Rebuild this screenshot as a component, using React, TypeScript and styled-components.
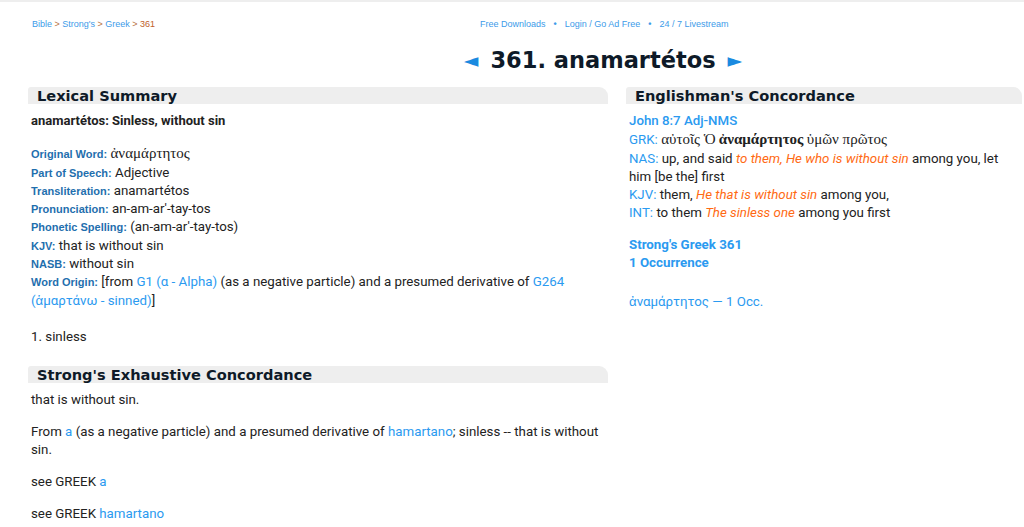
import styled, { createGlobalStyle } from "styled-components";

const GlobalStyle = createGlobalStyle`
  body {
    margin: 0;
    background: #fff;
    font-family: Roboto, "Liberation Sans", Arial, sans-serif;
    color: #222;
  }
`;

const Page = styled.div`
  border-top: 2px solid #eeeeee;
  width: 1024px;
  overflow: hidden;
`;

const TopBar = styled.div`
  display: grid;
  grid-template-columns: 448px 1fr;
  align-items: center;
  height: 43px;
  padding-top: 1px;
  padding-left: 32px;
  font-family: "Liberation Sans", Arial, sans-serif;
  font-size: 9px;
  box-sizing: border-box;
`;

const Crumbs = styled.div`
  color: #b8703e;
  a { color: #3d9be9; text-decoration: none; }
  span { color: #c0602a; }
`;

const TopNav = styled.div`
  color: #3d9be9;
  display: flex;
  align-items: center;
  gap: 8px;
  b { font-size: 9px; }
`;

const Title = styled.h1`
  margin: 0;
  height: 30px;
  display: flex;
  align-items: center;
  justify-content: center;
  padding-left: 182px;
  gap: 12px;
  font-family: "DejaVu Sans", Verdana, sans-serif;
  font-weight: bold;
  font-size: 22.5px;
  color: #0e1a28;
`;

const Arrow = styled.span`
  color: #1a8ae0;
  font-size: 19px;
  font-weight: normal;
`;

const Columns = styled.div`
  display: grid;
  grid-template-columns: 580px 396px;
  gap: 18px;
  padding-left: 28px;
  margin-top: 12px;
`;

const Column = styled.div``;

const SectionHead = styled.h2`
  margin: 0;
  height: 17px;
  line-height: 18px;
  background: #eeeeee;
  border-radius: 3px 9px 0 0;
  padding-left: 9px;
  font-family: "DejaVu Sans", Verdana, sans-serif;
  font-weight: bold;
  font-size: 14.6px;
  color: #0e1a28;
  overflow: hidden;
`;

const Body = styled.div<{ $top?: number }>`
  padding: ${(p) => p.$top ?? 8}px 3px 0 3px;
  font-size: 13.3px;
  line-height: 18.3px;
`;

const Summary = styled.div`
  font-weight: bold;
  font-size: 13px;
  margin-bottom: 14px;
`;

const Row = styled.div``;

const Label = styled.b`
  font-family: "Liberation Sans", Arial, sans-serif;
  font-size: 11px;
  color: #1f6fae;
`;

const Greek = styled.span<{ $bold?: boolean }>`
  font-family: "Liberation Serif", "DejaVu Serif", serif;
  font-size: 15px;
  font-weight: ${(p) => (p.$bold ? "bold" : "normal")};
`;

const Link = styled.a`
  color: #2b9af0;
  text-decoration: none;
`;

const Para = styled.p<{ $gap?: number }>`
  margin: 0 0 ${(p) => p.$gap ?? 13.5}px 0;
`;

const Spacer = styled.div<{ $h: number }>`
  height: ${(p) => p.$h}px;
`;

const Ref = styled.div`
  color: #2b9af0;
  font-weight: 500;
`;

const Tag = styled.span`
  color: #2b9af0;
`;

const Hl = styled.i`
  color: #ff6a13;
`;

const Strong = styled.div`
  color: #2b9af0;
  font-weight: bold;
`;

export default function App() {
  return (
    <>
      <GlobalStyle />
      <Page>
        <TopBar>
          <Crumbs>
            <a>Bible</a> &gt; <a>Strong's</a> &gt; <a>Greek</a> &gt; <span>361</span>
          </Crumbs>
          <TopNav>
            <span>Free Downloads</span>
            <b>•</b>
            <span>Login / Go Ad Free</span>
            <b>•</b>
            <span>24 / 7 Livestream</span>
          </TopNav>
        </TopBar>
        <Title>
          <Arrow>◄</Arrow>
          361. anamartétos
          <Arrow>►</Arrow>
        </Title>
        <Columns>
          <Column>
            <SectionHead>Lexical Summary</SectionHead>
            <Body>
              <Summary>anamartétos: Sinless, without sin</Summary>
              <Row><Label>Original Word:</Label> <Greek>ἀναμάρτητος</Greek></Row>
              <Row><Label>Part of Speech:</Label> Adjective</Row>
              <Row><Label>Transliteration:</Label> anamartétos</Row>
              <Row><Label>Pronunciation:</Label> an-am-ar'-tay-tos</Row>
              <Row><Label>Phonetic Spelling:</Label> (an-am-ar'-tay-tos)</Row>
              <Row><Label>KJV:</Label> that is without sin</Row>
              <Row><Label>NASB:</Label> without sin</Row>
              <Row>
                <Label>Word Origin:</Label> [from <Link>G1 (α - Alpha)</Link> (as a negative particle) and a presumed derivative of <Link>G264 (ἁμαρτάνω - sinned)</Link>]
              </Row>
              <Spacer $h={18} />
              <Para $gap={20}>1. sinless</Para>
            </Body>
            <SectionHead>Strong's Exhaustive Concordance</SectionHead>
            <Body $top={8}>
              <Para>that is without sin.</Para>
              <Para>
                From <Link>a</Link> (as a negative particle) and a presumed derivative of <Link>hamartano</Link>; sinless -- that is without sin.
              </Para>
              <Para>see GREEK <Link>a</Link></Para>
              <Para>see GREEK <Link>hamartano</Link></Para>
            </Body>
          </Column>
          <Column>
            <SectionHead>Englishman's Concordance</SectionHead>
            <Body>
              <Ref>John 8:7 Adj-NMS</Ref>
              <Row><Tag>GRK:</Tag> <Greek>αὐτοῖς Ὁ</Greek> <Greek $bold>ἀναμάρτητος</Greek> <Greek>ὑμῶν πρῶτος</Greek></Row>
              <Row><Tag>NAS:</Tag> up, and said <Hl>to them, He who is without sin</Hl> among you, let him [be the] first</Row>
              <Row><Tag>KJV:</Tag> them, <Hl>He that is without sin</Hl> among you,</Row>
              <Row><Tag>INT:</Tag> to them <Hl>The sinless one</Hl> among you first</Row>
              <Spacer $h={13} />
              <Strong>Strong's Greek 361</Strong>
              <Strong>1 Occurrence</Strong>
              <Spacer $h={21} />
              <Row><Link>ἀναμάρτητος — 1 Occ.</Link></Row>
            </Body>
          </Column>
        </Columns>
      </Page>
    </>
  );
}
